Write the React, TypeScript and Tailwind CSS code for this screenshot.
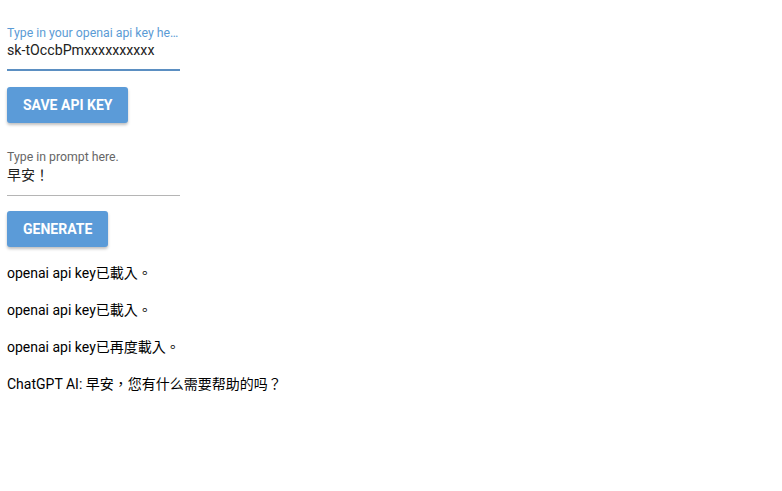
import { useState } from 'react';

const LOGS = [
  'openai api key已載入。',
  'openai api key已載入。',
  'openai api key已再度載入。',
  'ChatGPT AI: 早安，您有什么需要帮助的吗？',
];

const font = { fontFamily: 'Roboto, "Noto Sans CJK TC", sans-serif' };

export default function App() {
  const [apiKey, setApiKey] = useState('sk-tOccbPmxxxxxxxxxx');
  const [prompt, setPrompt] = useState('早安！');

  return (
    <div className="min-h-screen bg-white px-[7px] pt-[25px] text-[14px] text-black" style={font}>
      <div className="w-[173px]">
        {/* label is clipped with an ellipsis, as in the original */}
        <label className="block truncate text-[12.3px] leading-[16px] text-[#5b9bd5]">
          Type in your openai api key here.
        </label>
        <input
          value={apiKey}
          onChange={(e) => setApiKey(e.target.value)}
          className="block h-[20px] w-full bg-transparent text-[14.2px] text-[#222] outline-none"
          style={font}
        />
        <div className="mt-[8px] h-[2px] bg-[#5b8fc2]" />
      </div>

      <button className="mt-[16px] h-[36px] rounded-[3px] bg-[#5b9bd8] px-[16px] text-[14px] font-bold uppercase text-white shadow-[0_2px_3px_rgba(0,0,0,0.25)]">
        Save API Key
      </button>

      <div className="mt-[26px] w-[173px]">
        <label className="block text-[12.3px] leading-[16px] text-[#666]">Type in prompt here.</label>
        <input
          value={prompt}
          onChange={(e) => setPrompt(e.target.value)}
          className="block h-[20px] w-full bg-transparent text-[14px] text-[#222] outline-none"
          style={font}
        />
        <div className="mt-[10px] h-px bg-[#b5b5b5]" />
      </div>

      <button className="mt-[15px] h-[36px] rounded-[3px] bg-[#5b9bd8] px-[16px] text-[14px] font-bold uppercase text-white shadow-[0_2px_3px_rgba(0,0,0,0.25)]">
        Generate
      </button>

      <div className="mt-[16px] flex flex-col gap-[17px]">
        {LOGS.map((line, i) => (
          <p key={i} className="leading-[20px]">{line}</p>
        ))}
      </div>
    </div>
  );
}
